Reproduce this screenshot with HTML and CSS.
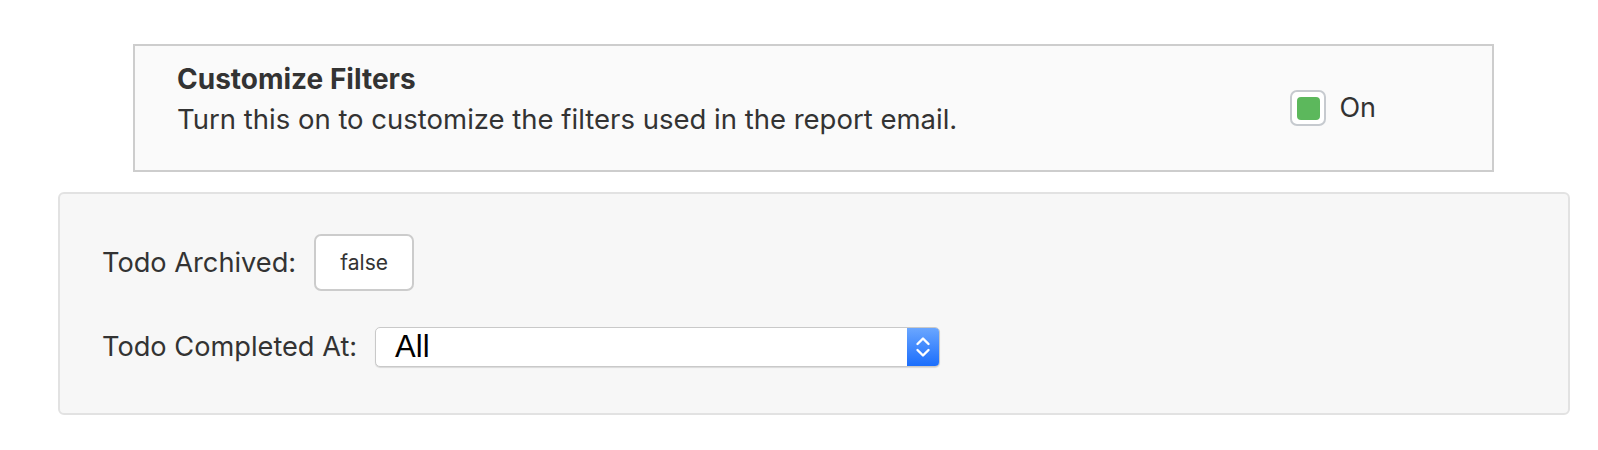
FILE: index.html
```html
<!DOCTYPE html>
<html lang="en">
<head>
<meta charset="utf-8">
<title>Customize Filters</title>
<link rel="stylesheet" href="styles.css">
</head>
<body>
<div class="page">
  <section class="toggle-card">
    <div class="toggle-text">
      <div class="toggle-title">Customize Filters</div>
      <div class="toggle-desc">Turn this on to customize the filters used in the report email.</div>
    </div>
    <label class="toggle-control">
      <span class="checkbox"><span class="checkbox-fill"></span></span>
      <span class="toggle-label">On</span>
    </label>
  </section>
  <section class="filters">
    <div class="filter-row">
      <span class="filter-label">Todo Archived:</span>
      <span class="bool-btn">false</span>
    </div>
    <div class="filter-row">
      <span class="filter-label">Todo Completed At:</span>
      <div class="select">
        <span class="select-value">All</span>
        <span class="select-arrows">
          <svg width="18" height="28" viewBox="0 0 18 28" fill="none" stroke="#fff" stroke-width="2.4" stroke-linecap="round" stroke-linejoin="round">
            <path d="M3.5 11 L9 5.5 L14.5 11"/>
            <path d="M3.5 17 L9 22.5 L14.5 17"/>
          </svg>
        </span>
      </div>
    </div>
  </section>
</div>
</body>
</html>
```

FILE: styles.css
```css
html, body {
  margin: 0;
  padding: 0;
  background: #ffffff;
}

body {
  font-family: Inter, "Noto Sans", "Liberation Sans", sans-serif;
  color: #333333;
}

.page {
  padding-top: 44px;
}

.toggle-card {
  box-sizing: border-box;
  margin-left: 133px;
  width: 1361px;
  height: 128px;
  border: 2px solid #cdcdcd;
  background: #fafafa;
  display: flex;
  align-items: center;
  justify-content: space-between;
  padding: 0 116px 0 42px;
}

.toggle-text {
  display: flex;
  flex-direction: column;
  margin-bottom: 19px;
}

.toggle-title {
  font-size: 28px;
  font-weight: 700;
  line-height: 40px;
}

.toggle-desc {
  font-size: 27.5px;
  line-height: 40px;
}

.toggle-control {
  display: flex;
  align-items: center;
  gap: 13px;
}

.checkbox {
  box-sizing: border-box;
  width: 36px;
  height: 36px;
  border: 2px solid #c6cacf;
  border-radius: 7px;
  background: #ffffff;
  display: flex;
  align-items: center;
  justify-content: center;
}

.checkbox-fill {
  width: 23px;
  height: 23px;
  border-radius: 4px;
  background: #5cb85c;
}

.toggle-label {
  font-size: 27px;
  line-height: 34px;
}

.filters {
  box-sizing: border-box;
  margin-top: 20px;
  margin-left: 58px;
  width: 1512px;
  height: 223px;
  border: 2px solid #e2e2e2;
  border-radius: 6px;
  background: #f7f7f7;
  padding: 40px 42px;
  display: flex;
  flex-direction: column;
  gap: 36px;
}

.filter-row {
  display: flex;
  align-items: center;
  gap: 18px;
}

.filter-label {
  font-size: 27.2px;
  line-height: 34px;
}

.bool-btn {
  box-sizing: border-box;
  width: 100px;
  height: 57px;
  border: 2px solid #cccccc;
  border-radius: 7px;
  background: #ffffff;
  display: flex;
  align-items: center;
  justify-content: center;
  font-size: 21px;
  color: #333333;
}

.select {
  box-sizing: border-box;
  width: 565px;
  height: 40px;
  border: 1px solid #c9c9c9;
  border-radius: 5px;
  background: #ffffff;
  box-shadow: 0 1px 1px rgba(0, 0, 0, 0.12);
  display: flex;
  align-items: stretch;
  overflow: hidden;
}

.select-value {
  flex: 1;
  font-family: "Liberation Sans", Arial, sans-serif;
  font-size: 31px;
  line-height: 38px;
  color: #000000;
  padding-left: 19px;
}

.select-arrows {
  width: 32px;
  background: linear-gradient(#6aa6ff, #1b6efc);
  display: flex;
  align-items: center;
  justify-content: center;
}
```
